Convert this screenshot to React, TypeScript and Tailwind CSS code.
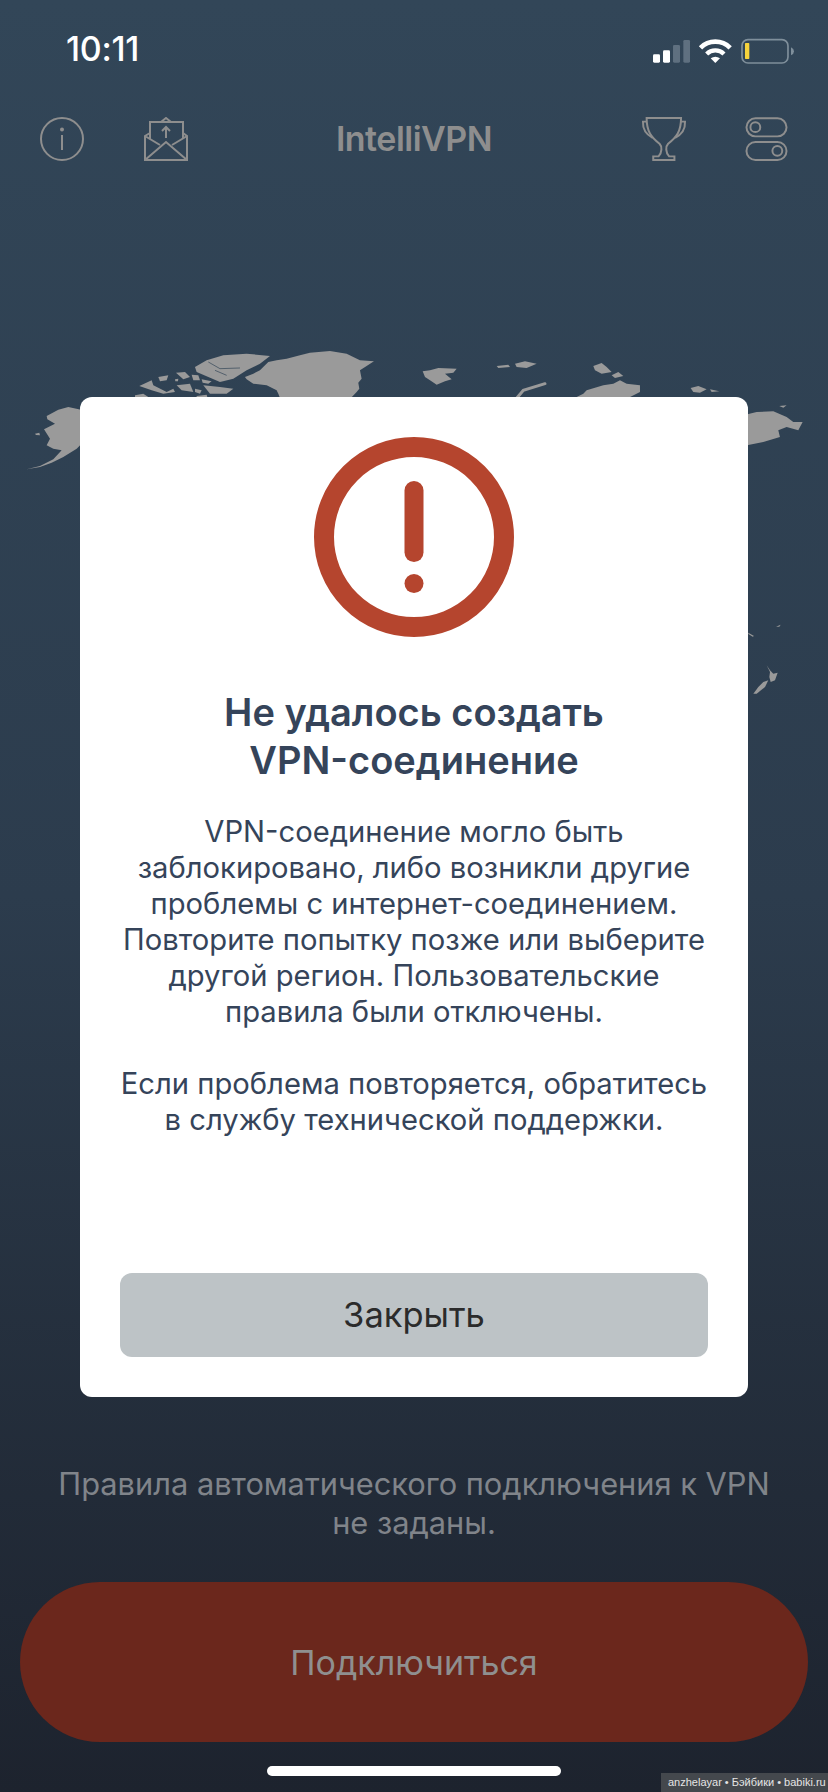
const font = "font-['Inter','Noto_Sans',sans-serif]"

const StatusIcons = () => (
  <svg viewBox="90 45 440 85" className="w-[146.67px] h-[28.33px]">
    <rect x="99" y="97" width="21" height="25" rx="4" fill="#fff" />
    <rect x="129" y="85" width="21" height="37" rx="4" fill="#fff" />
    <rect x="159" y="69" width="21" height="53" rx="4" fill="#5f7080" />
    <rect x="190" y="54" width="20" height="68" rx="4" fill="#5f7080" />
    <path d="M241.5 77.5A63 63 0 0 1 330.5 77.5" fill="none" stroke="#fff" strokeWidth="14" />
    <path d="M260 96A37 37 0 0 1 312 96" fill="none" stroke="#fff" strokeWidth="13" />
    <path d="M272 109Q286 99 300 109L286 123Z" fill="#fff" />
    <rect x="366" y="53" width="138" height="70" rx="18" fill="none" stroke="#7f8f9b" strokeWidth="5" />
    <rect x="375" y="63" width="13" height="48" rx="2" fill="#f6d33c" />
    <path d="M513 76Q522 80 522 88Q522 96 513 100Z" fill="#7f8f9b" />
  </svg>
)

const InfoIcon = () => (
  <svg viewBox="0 0 44 44" className="w-[44px] h-[44px]" fill="none" stroke="#8e8e8e" strokeWidth="2">
    <circle cx="22" cy="22" r="21" />
    <circle cx="22" cy="12.5" r="2" fill="#8e8e8e" stroke="none" />
    <path d="M22 18V33" />
  </svg>
)

const MailIcon = () => (
  <svg viewBox="124 17 44 44" className="w-[44px] h-[44px]" fill="none" stroke="#8e8e8e" strokeWidth="2">
    <path d="M125 36V60H167V36" />
    <path d="M130 39V22H163V39" />
    <path d="M141 22L146 18L151 22" />
    <path d="M146 38V27M142 31L146 27L150 31" />
    <path d="M130 33L125 36L140 45" />
    <path d="M163 33L167 36L152 45" />
    <path d="M125 60L146 42L167 60" />
  </svg>
)

const TrophyIcon = () => (
  <svg viewBox="60 285 145 145" className="w-[48px] h-[48px]" fill="none" stroke="#8e8e8e" strokeWidth="6">
    <path d="M80 294H184C184 335 170 352 145 372C137 380 137 398 148 410H164V421H100V410H116C127 398 127 380 119 372C94 352 80 335 80 294Z" />
    <path d="M80 305H69C68 325 75 342 98 354" />
    <path d="M184 305H196C197 325 190 342 166 354" />
  </svg>
)

const TogglesIcon = () => (
  <svg viewBox="376 290 130 134" className="w-[43px] h-[44px]" fill="none" stroke="#8e8e8e" strokeWidth="6">
    <rect x="380" y="294" width="122" height="55" rx="27.5" />
    <circle cx="407" cy="321" r="15" />
    <rect x="380" y="366" width="122" height="55" rx="27.5" />
    <circle cx="474" cy="393" r="15" />
  </svg>
)

const WorldMap = () => (
  <svg viewBox="0 340 828 370" className="block w-[828px] h-[370px]" fill="#9a9a9a">
    <g transform="translate(20 340) scale(0.3333)">
      <path d="M675 105L700 95L720 85L745 60L770 55L800 50L840 40L870 32L930 27L980 35L1000 45L1020 55L1062 58L1040 72L1020 85L1025 110L1015 122L1018 140L1010 150L990 171V180H785L775 155L770 145L740 130L700 125L680 112Z" />
      <path d="M80 222L115 203L145 195L190 205V300L170 320L130 345L95 362L60 375L20 382L60 372L100 352L125 325L100 320L80 310L90 290L72 262L105 245L82 232Z" />
      <path d="M525 75L560 55L610 40L680 35L750 42L720 65L680 85L640 110L600 120L565 105L530 90Z" />
      <path d="M565 60L600 80L660 78M585 85L620 100" fill="none" stroke="#2f4254" strokeWidth="2" />
      <path d="M358 132L395 115L400 130L440 150L460 140L465 150L430 155L395 145Z" />
      <path d="M415 105L445 100L440 115L420 118Z" />
      <path d="M468 92L495 90L510 105L490 112Z" />
      <path d="M515 98L535 100L540 115L520 115Z" />
      <path d="M470 130L510 125L520 150L485 145Z" />
      <path d="M550 130L600 135L640 140L620 155L570 155Z" />
      <path d="M525 140L545 145L540 155L525 150Z" />
      <path d="M345 160L370 155L400 175H345Z" />
      <path d="M455 165L475 165L470 175H455Z" />
      <path d="M530 162L560 158L565 175H530Z" />
      <path d="M575 168L620 165L650 175H575Z" />
      <path d="M45 275L58 272L60 280L48 279Z" />
      <path d="M465 112L475 110L474 118L466 118Z" />
      <path d="M545 112L575 118L565 125L548 122Z" />
    </g>
    <g transform="translate(410 340) scale(0.3333)">
      <path d="M38 88L60 85L85 78L140 80L130 92L105 95L125 112L105 118L80 128L60 115L45 105Z" />
      <path d="M260 72L295 68L300 75L265 78Z" />
      <path d="M315 65L345 58L380 65L350 78L320 75Z" />
      <path d="M315 175L340 145L405 125" fill="none" stroke="#9a9a9a" strokeWidth="9" strokeLinecap="round" />
      <path d="M550 72L575 63L590 75L605 90L575 95L555 85Z" />
      <path d="M605 100L625 90L640 102L615 108Z" />
      <path d="M480 175L520 155L530 145L580 130L610 125L630 115L650 125L690 130L690 150L650 170L720 165L725 175Z" />
      <path d="M755 165L780 168L785 175H755Z" />
      <path d="M842 138L865 132L890 142L870 152L850 150Z" />
      <path d="M900 142L928 148L905 150Z" />
      <path d="M1000 220L1040 210L1090 208L1130 225L1150 240L1178 240L1165 265L1130 255L1105 265L1110 285L1060 300L1000 312Z" />
      <path d="M1108 192L1130 190L1120 197Z" />
    </g>
    <g transform="translate(740 620) scale(0.3333)">
      <path d="M80 130L90 145L100 155L113 152L105 175L92 180L88 165L90 150Z" />
      <path d="M85 175L75 195L50 215L40 215L55 195L70 180Z" />
      <path d="M25 32L42 42L38 44L25 36Z" />
      <path d="M108 14L122 8L118 14Z" />
    </g>
  </svg>
)

const App = () => {
  return (
    <div className={`relative w-[828px] h-[1792px] overflow-hidden bg-gradient-to-b from-[#324658] via-[#2c3c4d] to-[#1d232e] ${font}`}>
      <div className="flex flex-col h-full">
        <div className="flex items-center justify-between h-[50px] mt-[24px] pl-[66px] pr-[31px]">
          <span className="text-[34px] font-medium text-white tracking-[-0.3px] leading-none">10:11</span>
          <div className="mt-[4px]">
            <StatusIcons />
          </div>
        </div>

        <div className="grid grid-cols-[1fr_auto_1fr] items-center px-[40px] mt-[41px]">
          <div className="flex gap-[60px]">
            <InfoIcon />
            <MailIcon />
          </div>
          <h1 className="text-[34px] leading-none font-semibold text-[#8e8e8e] tracking-[-0.5px]">IntelliVPN</h1>
          <div className="flex justify-end items-center gap-[57px]">
            <TrophyIcon />
            <TogglesIcon />
          </div>
        </div>

        <div className="mt-[179px]">
          <WorldMap />
        </div>

        <p className="mt-auto text-center text-[30.8px] leading-[39px] text-[#80848a]">
          Правила автоматического подключения к VPN
          <br />
          не заданы.
        </p>

        <button className="flex items-center justify-center mx-[20px] mt-[40px] h-[160px] rounded-[80px] bg-[#6b271c] text-[34px] text-[#8f8f8f]">
          Подключиться
        </button>

        <div className="flex justify-center mt-[24px] mb-[16px]">
          <div className="w-[294px] h-[10px] rounded-full bg-white"></div>
        </div>
      </div>

      <div className="absolute left-[80px] top-[397px] w-[668px] h-[1000px] flex flex-col items-center rounded-[12px] bg-white px-[20px] pt-[40px] pb-[40px]">
        <svg viewBox="0 0 200 200" className="w-[200px] h-[200px] shrink-0">
          <circle cx="100" cy="100" r="90" fill="none" stroke="#b5452e" strokeWidth="20" />
          <rect x="90.5" y="44" width="19" height="81" rx="9.5" fill="#b5452e" />
          <circle cx="100" cy="146.5" r="9.5" fill="#b5452e" />
        </svg>

        <h2 className="mt-[51px] text-center text-[38px] leading-[48px] font-semibold text-[#35445a]">
          Не удалось создать
          <br />
          VPN-соединение
        </h2>

        <p className="mt-[30px] text-center text-[29.2px] leading-[36px] text-[#35445a]">
          VPN-соединение могло быть
          <br />
          заблокировано, либо возникли другие
          <br />
          проблемы с интернет-соединением.
          <br />
          Повторите попытку позже или выберите
          <br />
          другой регион. Пользовательские
          <br />
          правила были отключены.
          <br />
          <br />
          Если проблема повторяется, обратитесь
          <br />
          в службу технической поддержки.
        </p>

        <button className="mt-auto flex items-center justify-center w-[588px] h-[84px] shrink-0 rounded-[12px] bg-[#bdc3c6] text-[34.5px] text-[#2b2b2b]">
          Закрыть
        </button>
      </div>

      <div className="absolute right-0 bottom-0 flex items-center w-[167px] h-[19px] pl-[7px] bg-[#44484d] text-[11px] text-[#e5e5e5] font-['Liberation_Sans',sans-serif] whitespace-nowrap">
        anzhelayar • Бэйбики • babiki.ru
      </div>
    </div>
  )
}

export default App
